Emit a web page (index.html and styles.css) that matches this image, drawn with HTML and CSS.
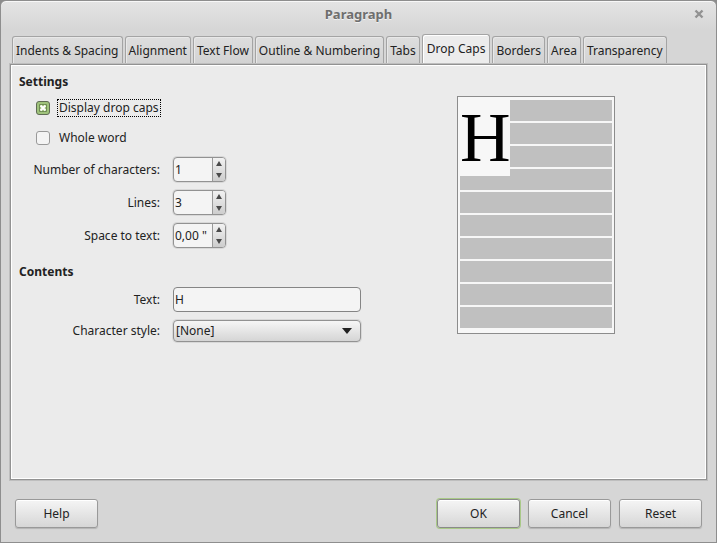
FILE: index.html
```html
<!DOCTYPE html>
<html lang="en">
<head>
<meta charset="utf-8">
    <title>Paragraph</title>
    <link rel="stylesheet" href="styles.css">
</head>
<body>
<form class="dialog" onsubmit="return false">
    <header class="titlebar">
        <h1>Paragraph</h1>
        <button type="button" class="close" aria-label="Close">
            <svg width="10" height="10" viewBox="0 0 10 10"><path d="M1.5 1.5l7 7M8.5 1.5l-7 7" stroke="#929292" stroke-width="2.4"/></svg>
        </button>
    </header>

    <nav class="tabs" role="tablist">
        <button type="button" role="tab">Indents &amp; Spacing</button>
        <button type="button" role="tab">Alignment</button>
        <button type="button" role="tab">Text Flow</button>
        <button type="button" role="tab">Outline &amp; Numbering</button>
        <button type="button" role="tab">Tabs</button>
        <button type="button" role="tab" class="active" aria-selected="true">Drop Caps</button>
        <button type="button" role="tab">Borders</button>
        <button type="button" role="tab">Area</button>
        <button type="button" role="tab">Transparency</button>
    </nav>

    <main class="page">
        <div class="options">
            <h2>Settings</h2>
            <div class="checks">
                <div class="check">
                    <input type="checkbox" id="dropcaps" checked>
                    <label for="dropcaps" class="focused">Display drop caps</label>
                </div>
                <div class="check">
                    <input type="checkbox" id="wholeword">
                    <label for="wholeword">Whole word</label>
                </div>
            </div>
            <div class="fields spins">
                <label for="chars">Number of characters:</label>
                <div class="spin">
                    <input type="text" id="chars" value="1">
                    <div class="arrows">
                        <button type="button" class="up" aria-label="More characters"></button>
                        <button type="button" class="down" aria-label="Fewer characters"></button>
                    </div>
                </div>
                <label for="lines">Lines:</label>
                <div class="spin">
                    <input type="text" id="lines" value="3">
                    <div class="arrows">
                        <button type="button" class="up" aria-label="More lines"></button>
                        <button type="button" class="down" aria-label="Fewer lines"></button>
                    </div>
                </div>
                <label for="space">Space to text:</label>
                <div class="spin">
                    <input type="text" id="space" value="0,00 &quot;">
                    <div class="arrows">
                        <button type="button" class="up" aria-label="More space"></button>
                        <button type="button" class="down" aria-label="Less space"></button>
                    </div>
                </div>
            </div>

            <h2>Contents</h2>
            <div class="fields contents">
                <label for="text">Text:</label>
                <input type="text" id="text" class="text" value="H">
                <label for="style">Character style:</label>
                <div class="combo">
                    <select id="style">
                        <option>[None]</option>
                    </select>
                    <svg width="10" height="6" viewBox="0 0 10 6"><path d="M0 0h10L5 6z" fill="#222"/></svg>
                </div>
            </div>
        </div>

        <div class="preview">
            <span class="cap">H</span>
            <i></i><i></i><i></i><i></i><i></i>
            <i></i><i></i><i></i><i></i><i></i>
        </div>
    </main>

    <footer class="buttons">
        <button type="button" class="btn help">Help</button>
        <button type="submit" class="btn default">OK</button>
        <button type="button" class="btn">Cancel</button>
        <button type="reset" class="btn">Reset</button>
    </footer>
</form>
</body>
</html>
```
FILE: styles.css
```css
* { box-sizing: border-box; }
body { margin: 0; background: #8c8c8c; }
body, button, input, select {
    font-family: "Noto Sans", "Open Sans", sans-serif;
    font-size: 12px;
    line-height: 16px;
    color: #222;
}
button, input, select { margin: 0; padding: 0; }

.dialog {
    display: flex;
    flex-direction: column;
    min-height: 100vh;
    border: 1px solid #8e8e8e;
    border-radius: 6px 6px 0 0;
    background: linear-gradient(#e4e4e4, #d6d6d6 28px);
    box-shadow: inset 0 1px 0 #f8f8f8;
}

/* title bar */
.titlebar { display: flex; align-items: center; height: 26px; padding: 0 12px 0 22px; }
.titlebar h1 {
    flex: 1;
    margin: 0;
    text-align: center;
    font-size: 13px;
    line-height: 18px;
    color: #6e6e6e;
    text-shadow: 0 1px 0 #f0f0f0;
}
.close { display: flex; border: 0; background: none; }

/* tabs */
.tabs { display: flex; align-items: flex-end; gap: 2px; height: 37px; padding: 0 11px; }
.tabs button {
    height: 28px;
    padding: 0 3px;
    border: 1px solid #a4a4a4;
    border-bottom: 0;
    border-radius: 3px 3px 0 0;
    background: linear-gradient(#dedede, #d2d2d2);
    box-shadow: inset 1px 1px 0 #e8e8e8;
    white-space: nowrap;
}
.tabs .active { height: 30px; padding: 0 4px 2px; background: #ececec; box-shadow: inset 1px 1px 0 #fff; }

.page {
    display: flex;
    flex: 1;
    margin: 0 9px;
    padding: 8px;
    border: 1px solid #929292;
    background: #ebebeb;
    box-shadow: inset 0 0 0 1px #fff, 0 0 0 1px #bebebe;
}
.options { flex: 0 0 438px; }
.options h2 { margin: 0; font-size: 12px; line-height: 18px; }

.checks { display: flex; flex-direction: column; gap: 10px; padding: 7px 0 9px 17px; }
.check { display: flex; align-items: center; gap: 7px; height: 20px; }
.check input {
    appearance: none;
    width: 14px;
    height: 14px;
    border: 1px solid #999;
    border-radius: 3px;
    background: #f4f4f4;
}
.check input:checked {
    border-color: #5f6b54;
    background: #9fc37b url("data:image/svg+xml,%3Csvg xmlns='http://www.w3.org/2000/svg' width='12' height='12'%3E%3Cpath d='M2.5 2.5h7v7h-7z' fill='none' stroke='%236d8a52'/%3E%3Cpath d='M3.5 3.5l5 5M8.5 3.5l-5 5' stroke='%23fff' stroke-width='2'/%3E%3C/svg%3E") center no-repeat;
}
.check label { padding: 0 1px; border: 1px solid transparent; }
.check .focused { border: 1px dotted #000; }

.fields { display: grid; grid-template-columns: 141px 188px; column-gap: 13px; align-items: center; }
.fields label { text-align: right; }
.spins { row-gap: 8px; margin-bottom: 15px; }
.contents { row-gap: 8px; margin-top: 6px; }

.spin {
    display: flex;
    width: 53px;
    height: 25px;
    border: 1px solid #929292;
    border-radius: 4px;
    background: #f4f4f4;
    box-shadow: 0 0 0 1px #d8d8d8;
    overflow: hidden;
}
.spin input { width: 38px; padding-left: 1px; border: 0; background: none; }
.arrows {
    display: flex;
    flex: 1;
    flex-direction: column;
    border-left: 1px solid #999;
    background: linear-gradient(#f2f2f2, #cdcdcd);
}
.arrows button { display: flex; flex: 1; align-items: center; justify-content: center; border: 0; background: none; }
.arrows button::before { content: ""; border: 3px solid transparent; }
.arrows .up::before { border-top: 0; border-bottom: 5px solid #4a4a4a; }
.arrows .down::before { border-bottom: 0; border-top: 5px solid #4a4a4a; }

.text { width: 100%; height: 25px; padding-left: 1px; border: 1px solid #858585; border-radius: 4px; background: #f4f4f4; }
.combo { position: relative; }
.combo select {
    display: block;
    appearance: none;
    width: 100%;
    height: 22px;
    padding-left: 2px;
    border: 1px solid #929292;
    border-radius: 4px;
    background: linear-gradient(#f6f6f6, #d5d5d5);
    box-shadow: 0 0 0 1px #d8d8d8;
}
.combo svg { position: absolute; top: 8px; right: 9px; pointer-events: none; }

/* sample of the paragraph */
.preview {
    position: relative;
    align-self: flex-start;
    width: 158px;
    margin-top: 23px;
    padding: 3px 2px 5px;
    border: 1px solid #8c8c8c;
    background: #f7f7f7;
}
.preview i { display: block; height: 21px; margin-bottom: 2px; background: #c0c0c0; }
.preview i:last-child { margin-bottom: 0; }
.cap {
    position: absolute;
    top: 2px;
    left: 2px;
    width: 50px;
    height: 77px;
    background: #f7f7f7;
    color: #000;
    font-family: "Liberation Serif", serif;
    font-size: 70px;
    line-height: 77px;
}

/* bottom buttons */
.buttons { display: flex; gap: 8px; padding: 19px 14px 14px; }
.btn {
    width: 83px;
    height: 29px;
    border: 1px solid #999;
    border-radius: 3px;
    background: linear-gradient(#f5f5f5, #d6d6d6);
    box-shadow: inset 0 1px 0 #fff, 0 1px 1px #b4b4b4;
}
.help { margin-right: auto; }
.default { border-color: #8a8a8a; background-clip: padding-box; box-shadow: inset 0 1px 0 #fff, 0 0 0 1px #a9c988; }
```
